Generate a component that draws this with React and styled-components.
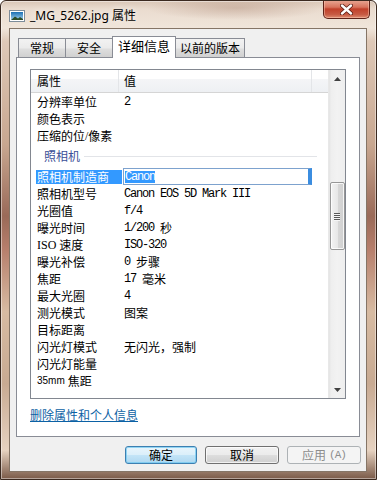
import React from "react";
import styled, { createGlobalStyle, css } from "styled-components";

const Global = createGlobalStyle`
  html, body { margin: 0; padding: 0; background: #ffffff; }
  body { font-family: "Liberation Sans", "Noto Sans CJK SC", sans-serif; }
  * { box-sizing: border-box; }
`;

const CJK = /[\u3000-\u303f\u4e00-\u9fff\uff00-\uffef]/;
const CJK_SPLIT = /([\u3000-\u303f\u4e00-\u9fff\uff00-\uffef]+)/;

const Window = styled.div`
  width: 377px;
  height: 480px;
  display: flex;
  flex-direction: column;
  padding: 0 9px 7px 8px;
  border: 1px solid #3b2a20;
  border-radius: 6px 6px 0 0;
  overflow: hidden;
  background:
    radial-gradient(ellipse 90px 12px at 235px 7px, rgba(160, 120, 100, 0.35), transparent),
    linear-gradient(to bottom, #d9c6b6 0, #eadccf 8px, #f0e5da 27px, rgba(240, 229, 218, 0) 40px),
    linear-gradient(to bottom, #e7d6c7 0%, #c8a790 30%, #9a6a58 45%, #b77f6c 52%, #d7bba2 65%, #c8aa92 80%, #e6d2c0 94%, #7a5a48 100%);
  box-shadow: inset 0 0 0 1px rgba(255, 255, 255, 0.45);
`;

const TitleBar = styled.div`
  height: 27px;
  display: flex;
  align-items: flex-start;
`;

const TitleLeft = styled.div`
  display: flex;
  align-items: center;
  gap: 5px;
  height: 26px;
  padding-top: 4px;
`;

const TitleText = styled.span`
  font-family: "Noto Sans", "Noto Sans CJK SC", sans-serif;
  font-size: 12px;
  line-height: 14px;
  color: #000;
  text-shadow: 0 0 6px rgba(255, 255, 255, 0.9);
`;

const CloseButton = styled.div`
  margin-left: auto;
  margin-right: -3px;
  margin-top: -1px;
  width: 47px;
  height: 19px;
  display: flex;
  align-items: center;
  justify-content: center;
  border: 1px solid #5e2218;
  border-top: none;
  border-radius: 0 0 5px 5px;
  background: linear-gradient(to bottom, #e9a996 0, #d8735d 40%, #c1402a 50%, #c75a43 80%, #de8d72 100%);
  box-shadow: inset 0 0 0 1px rgba(255, 210, 190, 0.45);
`;

const Client = styled.div`
  flex: 1;
  display: flex;
  flex-direction: column;
  background: #f0f0f0;
  border: 1px solid #857566;
  padding: 7px 6px 7px 6px;
`;

const TabStrip = styled.div`
  display: flex;
  align-items: flex-end;
  height: 22px;
  margin-bottom: -1px;
  padding-left: 2px;
`;

const Tab = styled.div`
  position: relative;
  width: ${(p) => p.$w}px;
  height: 20px;
  margin-left: -1px;
  display: flex;
  align-items: center;
  justify-content: center;
  padding-bottom: 1px;
  font-family: "Noto Sans CJK SC", sans-serif;
  font-size: 12px;
  line-height: 14px;
  color: #000;
  border: 1px solid #898c95;
  border-bottom: none;
  background: linear-gradient(to bottom, #f2f2f2 0, #ebebeb 45%, #dddddd 55%, #cfcfcf 100%);
  z-index: 0;
  &:first-child { margin-left: 0; }
  ${(p) =>
    p.$active &&
    css`
      height: 22px;
      padding-bottom: 3px;
      background: #ffffff;
      z-index: 2;
      font-size: 13px;
    `}
`;

const Panel = styled.div`
  position: relative;
  z-index: 1;
  flex: 1;
  display: flex;
  flex-direction: column;
  background: #ffffff;
  border: 1px solid #898c95;
  padding: 11px 13px 0 13px;
`;

const ListView = styled.div`
  height: 330px;
  display: flex;
  border: 1px solid #828790;
  background: #ffffff;
  overflow: hidden;
`;

const ListContent = styled.div`
  flex: 1;
  display: flex;
  flex-direction: column;
  overflow: hidden;
`;

const Header = styled.div`
  height: 23px;
  flex-shrink: 0;
  display: flex;
  border-bottom: 1px solid #d5d5d5;
  background: linear-gradient(to bottom, #ffffff 0, #ffffff 42%, #f4f5f7 43%, #eef0f3 100%);
`;

const HeaderCell = styled.div`
  width: ${(p) => (p.$w ? `${p.$w}px` : "auto")};
  flex: ${(p) => (p.$w ? "none" : "1")};
  display: flex;
  align-items: center;
  padding-left: ${(p) => p.$pad || 0}px;
  border-right: ${(p) => (p.$w ? "1px solid #e3e5e8" : "none")};
  font-family: "Noto Sans CJK SC", sans-serif;
  font-size: 12px;
  line-height: 14px;
  color: #000;
`;

const Row = styled.div`
  height: 17px;
  flex-shrink: 0;
  display: grid;
  grid-template-columns: 91px 1fr;
  align-items: center;
`;

const NameCell = styled.div`
  padding-left: 5px;
  height: 100%;
  display: flex;
  align-items: center;
`;

const NameBox = styled.div`
  flex: 1;
  height: 14px;
  padding-left: 1px;
  display: flex;
  align-items: center;
  white-space: pre;
  font-family: "Liberation Serif", "Noto Sans CJK SC", serif;
  font-size: 12px;
  line-height: 14px;
  color: #000;
  ${(p) =>
    p.$selected &&
    css`
      background: #3399ff;
      color: #ffffff;
    `}
`;

const Small = styled.span`
  font-family: "Liberation Sans", sans-serif;
  font-size: 10px;
  margin-right: 3px;
`;

const ValueCell = styled.div`
  padding-left: 2px;
  height: 100%;
  display: flex;
  align-items: center;
  white-space: pre;
  color: #000;
`;

const EditBox = styled.div`
  width: 189px;
  height: 17px;
  margin-left: -1px;
  padding-left: 1px;
  display: flex;
  align-items: center;
  border: 1px solid #7da2ce;
  border-right: 4px solid #3b8de0;
  background: #ffffff;
`;

const SelText = styled.span`
  display: inline-flex;
  align-items: center;
  height: 12px;
  background: #3399ff;
  color: #ffffff;
`;

const Mono = styled.span`
  font-family: "Liberation Mono", monospace;
  font-size: 12px;
  letter-spacing: -1.2px;
  line-height: 14px;
`;

const Han = styled.span`
  font-family: "Noto Sans CJK SC", sans-serif;
  font-size: 12px;
  line-height: 14px;
`;

const GroupHeader = styled.div`
  height: 24px;
  flex-shrink: 0;
  display: flex;
  align-items: center;
  gap: 4px;
  padding: 0 11px 0 13px;
  font-family: "Noto Sans CJK SC", sans-serif;
  font-size: 12px;
  line-height: 14px;
  color: #3b4f98;
`;

const GroupLine = styled.div`
  flex: 1;
  height: 1px;
  background: #e2e4e8;
`;

const ScrollBar = styled.div`
  width: 17px;
  flex-shrink: 0;
  display: flex;
  flex-direction: column;
  background: linear-gradient(to right, #e3e3e3 0, #eeeeee 2px, #f2f2f2 50%, #eeeeee 100%);
  border-left: 1px solid #e8e8e8;
`;

const ArrowBtn = styled.div`
  height: 17px;
  flex-shrink: 0;
  display: flex;
  align-items: center;
  justify-content: center;
`;

const Track = styled.div`
  flex: 1;
  display: flex;
  flex-direction: column;
  align-items: center;
`;

const Thumb = styled.div`
  width: 15px;
  height: 68px;
  display: flex;
  flex-direction: column;
  align-items: center;
  justify-content: center;
  gap: 1px;
  border: 1px solid #979797;
  border-radius: 2px;
  background: linear-gradient(to right, #f3f3f3 0, #e8e8e8 50%, #d8d8d8 51%, #d0d0d0 100%);
  box-shadow: inset 0 0 0 1px rgba(255, 255, 255, 0.8);
`;

const Grip = styled.div`
  width: 6px;
  height: 1px;
  background: #5a5a5a;
  box-shadow: 0 1px 0 #f6f6f6;
`;

const Link = styled.a`
  margin-top: 9px;
  align-self: flex-start;
  font-family: "Noto Sans CJK SC", sans-serif;
  font-size: 12px;
  line-height: 14px;
  color: #0b61a4;
  text-decoration: underline;
  cursor: pointer;
`;

const ButtonRow = styled.div`
  display: flex;
  justify-content: flex-end;
  gap: 8px;
  margin-top: 9px;
  margin-right: -1px;
`;

const Button = styled.div`
  width: ${(p) => p.$w}px;
  height: 18px;
  display: flex;
  align-items: center;
  justify-content: center;
  font-family: "Noto Sans CJK SC", sans-serif;
  font-size: 12px;
  line-height: 14px;
  color: #000;
  border: 1px solid #707070;
  border-radius: 3px;
  background: linear-gradient(to bottom, #f2f2f2 0, #ebebeb 48%, #dddddd 52%, #cfcfcf 100%);
  box-shadow: inset 0 0 0 1px rgba(255, 255, 255, 0.7);
  ${(p) =>
    p.$default &&
    css`
      border-color: #3c7fb1;
      background: linear-gradient(to bottom, #e9f5fc 0, #dbeffa 48%, #c3e4f7 52%, #afd8f1 100%);
      box-shadow: inset 0 0 0 1px rgba(110, 200, 240, 0.7);
    `}
  ${(p) =>
    p.$disabled &&
    css`
      color: #8d8d8d;
      border-color: #adb2b5;
      background: #f4f4f4;
      box-shadow: none;
    `}
`;

const Accel = styled.span`
  font-family: "Liberation Mono", monospace;
  font-size: 11px;
  letter-spacing: -1px;
  margin-left: 3px;
`;

const FileIcon = () => (
  <svg width="16" height="12" viewBox="0 0 16 12">
    <defs>
      <linearGradient id="sky" x1="0" y1="0" x2="0" y2="1">
        <stop offset="0" stopColor="#1b6fb3" />
        <stop offset="1" stopColor="#a9d6f2" />
      </linearGradient>
    </defs>
    <rect x="0.5" y="0.5" width="15" height="11" fill="#ffffff" stroke="#7d8c99" />
    <rect x="2" y="2" width="12" height="8" fill="url(#sky)" />
    <path d="M2 10 L6 6.5 L9 8.5 L11 7 L14 9 L14 10 Z" fill="#2e4d2a" />
  </svg>
);

const CloseX = () => (
  <svg width="13" height="11" viewBox="0 0 13 11">
    <path d="M2 1.5 L11 9.5 M11 1.5 L2 9.5" stroke="#5a1a10" strokeWidth="4" strokeLinecap="round" />
    <path d="M2 1.5 L11 9.5 M11 1.5 L2 9.5" stroke="#ffffff" strokeWidth="2.4" strokeLinecap="round" />
  </svg>
);

const UpArrow = () => (
  <svg width="7" height="4" viewBox="0 0 7 4">
    <path d="M0 4 L3.5 0 L7 4 Z" fill="#404040" />
  </svg>
);

const DownArrow = () => (
  <svg width="7" height="4" viewBox="0 0 7 4">
    <path d="M0 0 L3.5 4 L7 0 Z" fill="#404040" />
  </svg>
);

const runs = (s) =>
  s
    .split(CJK_SPLIT)
    .filter(Boolean)
    .map((t, i) => (CJK.test(t) ? <Han key={i}>{t}</Han> : <Mono key={i}>{t}</Mono>));

const tabs = [
  { label: "常规", w: 48 },
  { label: "安全", w: 48 },
  { label: "详细信息", w: 64, active: true },
  { label: "以前的版本", w: 70 },
];

const topRows = [
  ["分辨率单位", "2"],
  ["颜色表示", ""],
  ["压缩的位/像素", ""],
];

const cameraRows = [
  ["照相机制造商", "Canon", true],
  ["照相机型号", "Canon EOS 5D Mark III"],
  ["光圈值", "f/4"],
  ["曝光时间", "1/200 秒"],
  ["ISO 速度", "ISO-320"],
  ["曝光补偿", "0 步骤"],
  ["焦距", "17 毫米"],
  ["最大光圈", "4"],
  ["测光模式", "图案"],
  ["目标距离", ""],
  ["闪光灯模式", "无闪光，强制"],
  ["闪光灯能量", ""],
  ["35mm 焦距", ""],
];

const renderName = (name) => {
  if (name.startsWith("35mm")) {
    return (
      <>
        <Small>35mm</Small>
        <Han>焦距</Han>
      </>
    );
  }
  return name
    .split(CJK_SPLIT)
    .filter(Boolean)
    .map((t, i) => (CJK.test(t) ? <Han key={i}>{t}</Han> : <span key={i}>{t}</span>));
};

const PropRow = ({ name, value, selected }) => (
  <Row>
    <NameCell>
      <NameBox $selected={selected}>{renderName(name)}</NameBox>
    </NameCell>
    <ValueCell>
      {selected ? (
        <EditBox>
          <SelText>{runs(value)}</SelText>
        </EditBox>
      ) : (
        runs(value)
      )}
    </ValueCell>
  </Row>
);

export default function App() {
  return (
    <>
      <Global />
      <Window>
        <TitleBar>
          <TitleLeft>
            <FileIcon />
            <TitleText>_MG_5262.jpg 属性</TitleText>
          </TitleLeft>
          <CloseButton>
            <CloseX />
          </CloseButton>
        </TitleBar>
        <Client>
          <TabStrip>
            {tabs.map((t) => (
              <Tab key={t.label} $w={t.w} $active={t.active}>
                {t.label}
              </Tab>
            ))}
          </TabStrip>
          <Panel>
            <ListView>
              <ListContent>
                <Header>
                  <HeaderCell $w={88} $pad={6}>属性</HeaderCell>
                  <HeaderCell $w={193} $pad={5}>值</HeaderCell>
                  <HeaderCell />
                </Header>
                {topRows.map(([n, v]) => (
                  <PropRow key={n} name={n} value={v} />
                ))}
                <GroupHeader>
                  <span>照相机</span>
                  <GroupLine />
                </GroupHeader>
                {cameraRows.map(([n, v, s]) => (
                  <PropRow key={n} name={n} value={v} selected={s} />
                ))}
              </ListContent>
              <ScrollBar>
                <ArrowBtn>
                  <UpArrow />
                </ArrowBtn>
                <Track>
                  <Thumb style={{ marginTop: 95 }}>
                    <Grip />
                    <Grip />
                    <Grip />
                    <Grip />
                  </Thumb>
                </Track>
                <ArrowBtn>
                  <DownArrow />
                </ArrowBtn>
              </ScrollBar>
            </ListView>
            <Link>删除属性和个人信息</Link>
          </Panel>
          <ButtonRow>
            <Button $w={72} $default>确定</Button>
            <Button $w={74}>取消</Button>
            <Button $w={74} $disabled>
              应用<Accel>(A)</Accel>
            </Button>
          </ButtonRow>
        </Client>
      </Window>
    </>
  );
}
